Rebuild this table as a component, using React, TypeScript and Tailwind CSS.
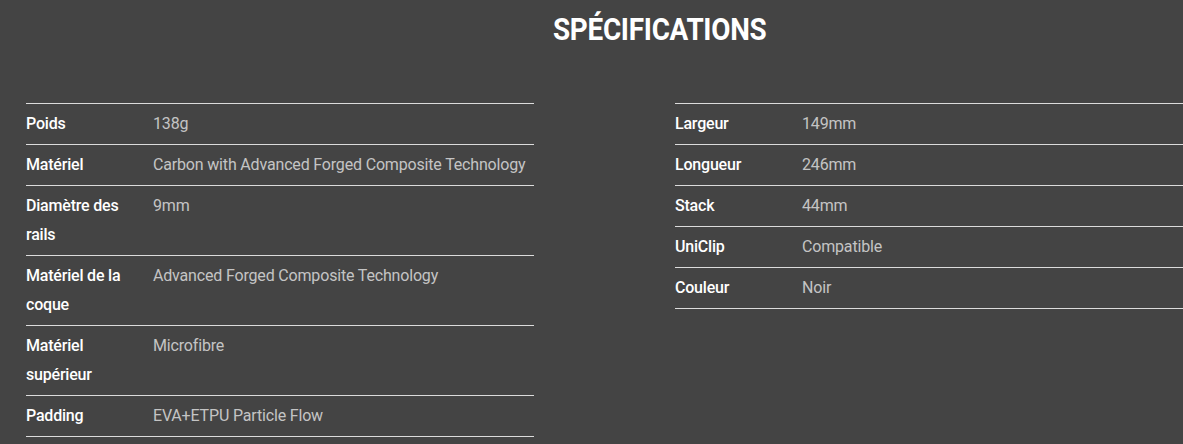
import React from "react";

const left: [string, string][] = [
  ["Poids", "138g"],
  ["Matériel", "Carbon with Advanced Forged Composite Technology"],
  ["Diamètre des rails", "9mm"],
  ["Matériel de la coque", "Advanced Forged Composite Technology"],
  ["Matériel supérieur", "Microfibre"],
  ["Padding", "EVA+ETPU Particle Flow"],
];

const right: [string, string][] = [
  ["Largeur", "149mm"],
  ["Longueur", "246mm"],
  ["Stack", "44mm"],
  ["UniClip", "Compatible"],
  ["Couleur", "Noir"],
];

function Table({ rows }: { rows: [string, string][] }) {
  return (
    <div className="w-[508px] border-t border-[#dcdcdc]">
      {rows.map(([k, v]) => (
        <div key={k} className="flex border-b border-[#dcdcdc] pt-[5px] pb-[6px] text-[16px] leading-[29px]">
          <div className="w-[127px] shrink-0 pr-3 font-medium tracking-[-0.2px] text-white">{k}</div>
          <div className="tracking-[-0.17px] text-[#c4c4c4]">{v}</div>
        </div>
      ))}
    </div>
  );
}

export default function App() {
  return (
    <div
      className="h-[444px] w-[1183px] overflow-hidden bg-[#444444]"
      style={{ fontFamily: "Roboto, 'Liberation Sans', sans-serif" }}
    >
      <div className="flex justify-center pl-[136px] pt-[9px]">
        <h1 className="scale-x-[0.87] text-[32px] font-bold leading-[40px] tracking-[-0.3px] text-white">SPÉCIFICATIONS</h1>
      </div>
      <div className="mt-[54px] flex gap-[141px] pl-[26px]">
        <Table rows={left} />
        <Table rows={right} />
      </div>
    </div>
  );
}
